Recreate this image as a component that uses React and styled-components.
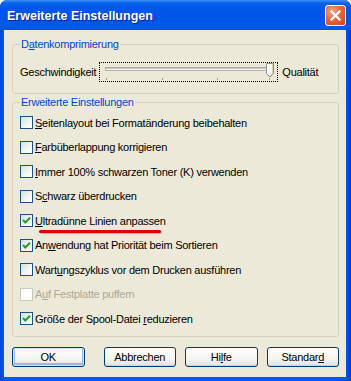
import React from 'react'
import styled, { createGlobalStyle } from 'styled-components'

const GlobalStyle = createGlobalStyle`
    html, body {
        margin: 0;
        padding: 0;
        background: #ffffff;
    }
    body {
        font-family: "Liberation Sans", Arial, sans-serif;
        font-size: 11px;
        letter-spacing: -0.25px;
    }
`

const options = [
    { label: 'Seitenlayout bei Formatänderung beibehalten', key: 0 },
    { label: 'Farbüberlappung korrigieren', key: 0 },
    { label: 'Immer 100% schwarzen Toner (K) verwenden', key: 0 },
    { label: 'Schwarz überdrucken', key: 1 },
    { label: 'Ultradünne Linien anpassen', key: 0, checked: true, marked: true },
    { label: 'Anwendung hat Priorität beim Sortieren', key: 2, checked: true },
    { label: 'Wartungszyklus vor dem Drucken ausführen', key: 4 },
    { label: 'Auf Festplatte puffern', key: 1, disabled: true },
    { label: 'Größe der Spool-Datei reduzieren', key: 22, checked: true },
]

const Hotkey = ({ text, at }) => (
    <>
        { text.slice(0, at) }
        <u>{ text.charAt(at) }</u>
        { text.slice(at + 1) }
    </>
)

const CloseIcon = () => (
    <svg width="11" height="11" viewBox="0 0 11 11">
        <path d="M1.5 1.5 L9.5 9.5 M9.5 1.5 L1.5 9.5" stroke="#fff" strokeWidth="2.2" strokeLinecap="square" />
    </svg>
)

const CheckMark = () => (
    <svg width="11" height="11" viewBox="0 0 11 11">
        <polyline points="2,5 4.3,7.5 9,2.7" fill="none" stroke="#21A121" strokeWidth="2" />
    </svg>
)

const Trackbar = () => (
    <svg width="177" height="18" viewBox="0 0 177 18">
        <rect x="5.5" y="4.5" width="166" height="3" fill="#f4f4f0" stroke="#b5b3a8" />
        <line x1="6" y1="5" x2="171" y2="5" stroke="#9d9c99" />
        {[6, 62, 117, 169].map(x => (
            <line key={x} x1={x + 0.5} y1="15" x2={x + 0.5} y2="17" stroke="#a2a196" />
        ))}
        <path d="M166.5 0.5 H173.5 V10.5 L170 14 L166.5 10.5 Z" fill="#f7f7f4" stroke="#8e8f8f" />
        <line x1="167.5" y1="1" x2="167.5" y2="10.5" stroke="#fff" />
        <path d="M172.5 1 V10.5 L170 13" fill="none" stroke="#d8d2bd" />
    </svg>
)

const App = () => (
    <>
        <GlobalStyle />
        <Window>
            <TitleBar>
                <Title>Erweiterte Einstellungen</Title>
                <CloseButton><CloseIcon /></CloseButton>
            </TitleBar>

            <Client>
                <Group $top={8}>
                    <Legend><Hotkey text="Datenkomprimierung" at={1} /></Legend>
                    <SliderRow>
                        <span>Geschwindigkeit</span>
                        <SliderFocus><Trackbar /></SliderFocus>
                        <span>Qualität</span>
                    </SliderRow>
                </Group>

                <Group $top={2}>
                    <Legend>Erweiterte Einstellungen</Legend>
                    <OptionList>
                        {options.map(opt => (
                            <Option key={opt.label} $disabled={opt.disabled}>
                                <Box $disabled={opt.disabled}>{ opt.checked && <CheckMark /> }</Box>
                                <span><Hotkey text={opt.label} at={opt.key} /></span>
                                { opt.marked && <RedMark /> }
                            </Option>
                        ))}
                    </OptionList>
                </Group>

                <ButtonRow>
                    <Button $default>OK</Button>
                    <Button>Abbrechen</Button>
                    <Button><Hotkey text="Hilfe" at={2} /></Button>
                    <Button><Hotkey text="Standard" at={7} /></Button>
                </ButtonRow>
            </Client>
        </Window>
    </>
)

export default App

const Window = styled.div`
    width: 351px;
    height: 381px;
    box-sizing: border-box;
    display: flex;
    flex-direction: column;
    background: linear-gradient(to right, #0842d3 0, #0058ee 3px, #0058ee 346px, #0738c8 351px);
    border-radius: 7px 7px 0 0;
    overflow: hidden;
    padding: 0 5px 4px 4px;
`

const TitleBar = styled.div`
    height: 30px;
    flex: 0 0 auto;
    display: flex;
    align-items: center;
    justify-content: space-between;
    margin: 0 -5px 0 -4px;
    padding: 0 5px 0 7px;
    background: linear-gradient(to bottom,
        #3d8ef8 0px, #0a63ec 3px, #0058e8 7px, #0055e6 20px, #0058ee 27px, #0052e2 30px);
`

const Title = styled.div`
    color: #ffffff;
    font-family: "Liberation Sans", Arial, sans-serif;
    font-weight: bold;
    font-size: 12.5px;
    letter-spacing: 0;
    text-shadow: 1px 1px 0 #0a1ea0;
    padding-top: 1px;
`

const CloseButton = styled.div`
    width: 19px;
    height: 19px;
    margin-top: 1px;
    display: flex;
    align-items: center;
    justify-content: center;
    border: 1px solid #ffffff;
    border-radius: 3px;
    background: radial-gradient(circle at 35% 30%, #f4a98c 0%, #e5683f 45%, #cc4119 100%);
`

const Client = styled.div`
    flex: 1 1 auto;
    display: flex;
    flex-direction: column;
    background: #ece9d8;
    padding: 0 7px 0 8px;
    color: #000000;
`

const Group = styled.fieldset`
    margin: ${p => p.$top}px 0 0 0;
    padding: 0 7px 0 7px;
    border: 1px solid #d0d0bf;
    border-radius: 3px;
    min-inline-size: 0;
`

const Legend = styled.legend`
    color: #0046d5;
    padding: 0 1px;
    margin-left: 0;
    line-height: 13px;
`

const SliderRow = styled.div`
    display: flex;
    align-items: center;
    gap: 3px;
    height: 20px;
    margin: 11px 0 11px 0;
`

const SliderFocus = styled.div`
    width: 177px;
    height: 18px;
    border: 1px dotted #000000;
    margin-right: 1px;
`

const OptionList = styled.div`
    display: flex;
    flex-direction: column;
    gap: 11.5px;
    padding: 7px 0 11px 0;
`

const Option = styled.div`
    position: relative;
    display: flex;
    align-items: center;
    gap: 2px;
    height: 13px;
    color: ${p => (p.$disabled ? '#aca899' : '#000000')};
`

const Box = styled.div`
    width: 11px;
    height: 11px;
    flex: 0 0 auto;
    display: flex;
    align-items: center;
    justify-content: center;
    border: 1px solid ${p => (p.$disabled ? '#cac8bb' : '#1c5180')};
    background: ${p => (p.$disabled
        ? '#ffffff'
        : 'linear-gradient(135deg, #dcdcd7 0%, #f4f4f0 55%, #ffffff 100%)')};
`

const RedMark = styled.div`
    position: absolute;
    left: 19px;
    top: 16px;
    width: 122px;
    height: 3px;
    border-radius: 2px;
    background: #e00000;
    box-shadow: 1px 1px 1px rgba(0, 0, 0, 0.2);
`

const ButtonRow = styled.div`
    display: flex;
    gap: 9px;
    margin-top: 10px;
`

const Button = styled.div`
    width: 71px;
    height: 18px;
    display: flex;
    align-items: center;
    justify-content: center;
    border: 1px solid #003c74;
    border-radius: 3px;
    background: linear-gradient(to bottom, #ffffff 0%, #f4f4f0 60%, #e3e2da 100%);
    box-shadow: ${p => (p.$default
        ? 'inset 0 0 0 1px #cee7ff, inset 0 -1px 0 2px #98b8ea'
        : 'inset 0 -1px 0 #d6d0c5')};
    margin-right: ${p => (p.$default ? '10px' : '0')};
    color: #000000;
`
